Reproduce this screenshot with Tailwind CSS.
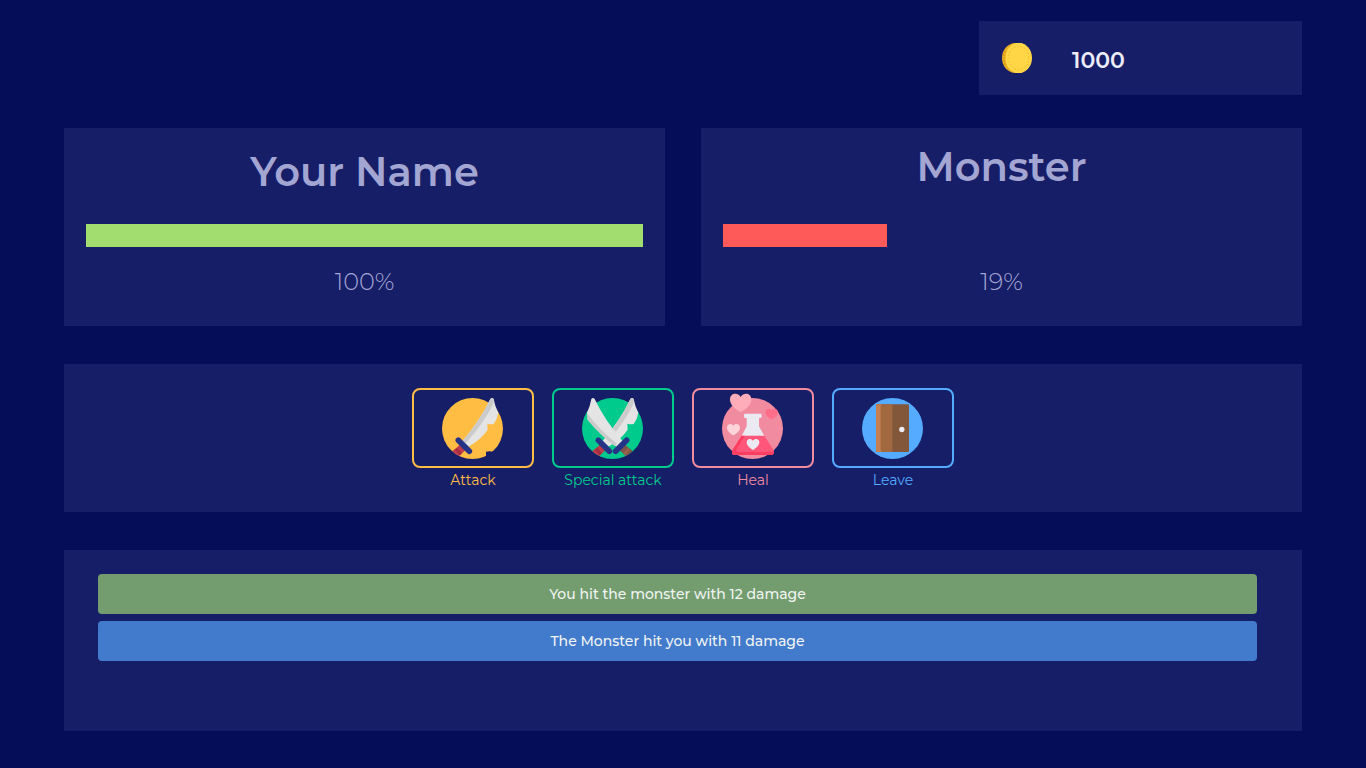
<!DOCTYPE html>
<html lang="en">
<head>
<meta charset="utf-8">
<meta name="viewport" content="width=device-width, initial-scale=1">
<title>Monster Battle</title>
<script src="https://cdn.jsdelivr.net/npm/@tailwindcss/browser@4"></script>
</head>
<body class="min-h-screen bg-[#050c58] font-['Montserrat','Inter',sans-serif] text-[#a3a5d2] antialiased">
<main class="flex flex-col px-16 pt-[21px] pb-9">
  <header class="flex justify-end">
    <div class="flex h-[74px] w-full max-w-[323px] items-center gap-10 bg-[#171e68] px-[23px]">
      <svg class="size-[30px]" viewBox="0 0 90 90" aria-hidden="true">
        <path d="M38 0C14 3 0 22 0 45C0 68 14 87 38 90H52V0Z" fill="#e9b021"/>
        <path d="M3 36h10M2 45h10M3 54h10M6 63h9M6 27h9" stroke="#cf9414" stroke-width="3"/>
        <ellipse cx="50" cy="45" rx="40" ry="46" fill="#ffd646"/>
        <ellipse cx="50" cy="45" rx="31" ry="35" fill="none" stroke="#efb62b" stroke-width="3" stroke-dasharray="4 6"/>
      </svg>
      <span class="pt-1 text-[22px] font-semibold text-[#ececf6]">1000</span>
    </div>
  </header>

  <section class="mt-[33px] grid grid-cols-2 gap-9 text-center">
    <article class="bg-[#171e68] px-[22px] pt-4 pb-6">
      <h1 class="text-[40px] leading-14 font-semibold">Your Name</h1>
      <div class="mt-6 h-[23px]"><div class="h-full bg-[#a2dd70]" style="width:100%"></div></div>
      <p class="mt-[15px] text-2xl leading-10 font-light">100%</p>
    </article>
    <article class="bg-[#171e68] px-[22px] pt-[11px] pb-6">
      <h1 class="text-[40px] leading-14 font-semibold">Monster</h1>
      <div class="mt-[29px] h-[23px]"><div class="h-full bg-[#ff5a5a]" style="width:29.5%"></div></div>
      <p class="mt-[15px] text-2xl leading-10 font-light">19%</p>
    </article>
  </section>

  <section class="mt-[38px] flex flex-wrap justify-center gap-[18px] bg-[#171e68] pt-6 pb-5 text-center text-sm leading-6">
    <div class="w-[122px] text-[#ffbd43]">
      <button type="button" aria-labelledby="l-attack" class="flex h-20 w-full items-center justify-center rounded-lg border-2 border-current">
        <svg class="size-[68px] overflow-visible" viewBox="102 42 204 204" aria-hidden="true">
          <clipPath id="disc"><circle cx="202.5" cy="145.5" r="91.5"/></clipPath>
          <circle cx="202.5" cy="145.5" r="91.5" fill="#ffbd43"/>
          <path d="M243 240V215Q256 212 262 215H275V240Z" fill="#171e68"/>
          <path d="M256 57Q261 51 266 57Q270 80 280 98Q277 118 266 132Q257 134 247 131L248 149Q230 177 190 200L172 184Q226 120 256 57Z" fill="#e4e4e4"/>
          <path d="M256 57Q261 51 266 57L266 70Q235 132 181 191L172 184Q226 120 256 57Z" fill="#cbcbcb"/>
          <g clip-path="url(#disc)"><path d="M165 194L181 211L158 232L138 217Z" fill="#c03a4c"/><path d="M157 203L171 220L164 227L150 209Z" fill="#a32f42"/></g>
          <path d="M160 181L193 214" stroke="#263488" stroke-width="17" stroke-linecap="round"/>
        </svg>
      </button>
      <span id="l-attack">Attack</span>
    </div>
    <div class="w-[122px] text-[#00cb8c]">
      <button type="button" aria-labelledby="l-special" class="flex h-20 w-full items-center justify-center rounded-lg border-2 border-current">
        <svg class="size-[68px] overflow-visible" viewBox="102 42 204 204" aria-hidden="true">
          <circle cx="202.5" cy="145.5" r="91.5" fill="#00cb8c"/>
          <path d="M256 57Q261 51 266 57Q270 80 280 98Q277 118 266 132Q257 134 247 131L248 149Q230 177 190 200L172 184Q226 120 256 57Z" fill="#e4e4e4"/>
          <path d="M256 57Q261 51 266 57L266 70Q245 115 212 156L203 145Q236 101 256 57Z" fill="#cbcbcb"/>
          <path d="M149 57Q144 51 139 57Q135 80 126 98L128 119Q165 165 215 200L233 184Q179 120 149 57Z" fill="#e4e4e4"/>
          <path d="M126 98L128 119Q165 165 209 198L216 191Q160 147 126 98Z" fill="#cbcbcb"/>
          <g clip-path="url(#disc)"><path d="M165 194L181 211L158 232L138 217Z" fill="#c03a4c"/><path d="M157 203L171 220L164 227L150 209Z" fill="#a32f42"/><path d="M240 194L224 211L247 232L267 217Z" fill="#7f5547"/><path d="M248 203L234 220L241 227L255 209Z" fill="#94624c"/></g>
          <path d="M160 181L193 214M245 181L212 214" stroke="#263488" stroke-width="17" stroke-linecap="round"/>
        </svg>
      </button>
      <span id="l-special">Special attack</span>
    </div>
    <div class="w-[122px] text-[#f08ba0]">
      <button type="button" aria-labelledby="l-heal" class="flex h-20 w-full items-center justify-center rounded-lg border-2 border-current">
        <svg class="size-[68px] overflow-visible" viewBox="102 42 204 204" aria-hidden="true">
          <circle cx="202.5" cy="145.5" r="91.5" fill="#f08ba0"/>
          <path d="M185 112H222V139L238 168H170L185 139Z" fill="#ebe9f1"/>
          <rect x="177" y="101" width="53" height="13" rx="4" fill="#ebe9f1"/>
          <path d="M170 167H238L266 211Q269 225 259 225H149Q138 225 142 211Z" fill="#ff5679"/>
          <path d="M170 167L142 211Q138 225 149 225H259Q266 225 267 216H160Q151 215 155 207L179 167Z" fill="#ff3d61"/>
          <path d="M204 210C194 204 185 196 185 187C185 176 198 174 204 182C210 174 223 176 223 187C223 196 214 204 204 210Z" fill="#ebe9f1"/>
          <path d="M167 96C149 86 135 74 135 59C135 39 158 36 167 51C176 36 199 39 199 59C199 74 185 86 167 96Z" fill="#ffadb8"/>
          <path d="M145 166C135 160 126 152 126 143C126 132 139 128 145 137C151 128 165 132 165 143C165 152 156 160 145 166Z" fill="#ffd3da"/>
          <path d="M260 119C250 113 241 106 241 97C241 86 254 83 260 91C266 83 279 86 279 97C279 106 270 113 260 119Z" fill="#ff6e89"/>
        </svg>
      </button>
      <span id="l-heal">Heal</span>
    </div>
    <div class="w-[122px] text-[#55abff]">
      <button type="button" aria-labelledby="l-leave" class="flex h-20 w-full items-center justify-center rounded-lg border-2 border-current">
        <svg class="size-[68px] overflow-visible" viewBox="102 42 204 204" aria-hidden="true">
          <circle cx="202.5" cy="145.5" r="91.5" fill="#55abff"/>
          <rect x="153" y="73" width="99" height="143" rx="4" fill="#83573a"/>
          <path d="M157 73H202V216H157Q153 216 153 212V77Q153 73 157 73Z" fill="#a2683f"/>
          <path d="M157 73H172Q167 74 167 80V209Q167 215 172 216H157Q153 216 153 212V77Q153 73 157 73Z" fill="#c48052"/>
          <circle cx="230.5" cy="148.5" r="8" fill="#ebe9f1"/>
        </svg>
      </button>
      <span id="l-leave">Leave</span>
    </div>
  </section>

  <section aria-label="Battle log" class="mt-[38px] min-h-[181px] bg-[#171e68] pt-6 pr-[45px] pb-6 pl-[34px]">
    <ul class="flex flex-col gap-[7px] text-center text-sm leading-10 font-medium text-[#f1f4f4]">
      <li class="rounded bg-[#739c6f]">You hit the monster with 12 damage</li>
      <li class="rounded bg-[#427bcb]">The Monster hit you with 11 damage</li>
    </ul>
  </section>
</main>
</body>
</html>
